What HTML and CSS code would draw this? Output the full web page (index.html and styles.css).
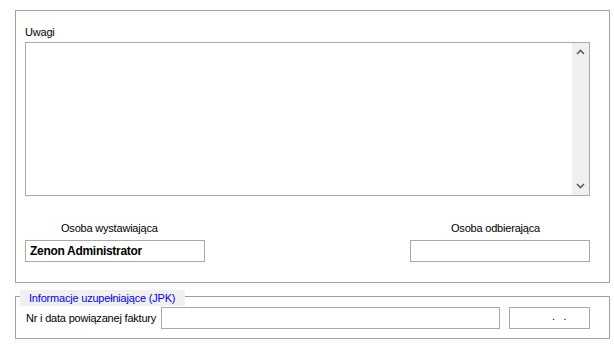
FILE: index.html
```html
<!DOCTYPE html>
<html>
<head>
    <meta charset="UTF-8">
    <title>Uwagi</title>
    <link rel="stylesheet" href="styles.css">
</head>
<body>
    <div class="panel">
        <div class="label">Uwagi</div>
        <div class="memo">
            <div class="memo-text"></div>
            <div class="scroll">
                <svg width="17" height="17" viewBox="0 0 17 17"><path d="M5 10 L8.5 6.5 L12 10" fill="none" stroke="#606060" stroke-width="1.6"/></svg>
                <svg width="17" height="17" viewBox="0 0 17 17"><path d="M5 7 L8.5 10.5 L12 7" fill="none" stroke="#606060" stroke-width="1.6"/></svg>
            </div>
        </div>

        <div class="people">
            <div class="person">
                <div class="person-label left">Osoba wystawiająca</div>
                <div class="field bold">Zenon Administrator</div>
            </div>
            <div class="person">
                <div class="person-label right">Osoba odbierająca</div>
                <div class="field"></div>
            </div>
        </div>
    </div>

    <div class="group">
        <div class="legend">Informacje uzupełniające (JPK)</div>
        <div class="row">
            <span class="row-label">Nr i data powiązanej faktury</span>
            <div class="field invoice"></div>
            <div class="field date"><span class="dots">.&nbsp;&nbsp;&nbsp;.</span></div>
        </div>
    </div>
</body>
</html>
```

FILE: styles.css
```css
body { margin: 0; background: #fff; font-family: "Liberation Sans", Arial, sans-serif; font-size: 11px; letter-spacing: -0.2px; color: #000; white-space: nowrap; }

.panel { box-sizing: border-box; margin: 10px 0 0 15px; width: 595px; height: 273px; border: 1px solid #a0a0a0; padding: 15px 0 0 9px; }
.label { line-height: 13px; height: 16px; }

.memo { box-sizing: border-box; display: flex; width: 565px; height: 154px; border: 1px solid #a9a9a9; }
.memo-text { flex: 1; }
.scroll { width: 17px; background: #f0f0f0; display: flex; flex-direction: column; justify-content: space-between; padding: 1px 0 1px; }
.scroll svg { display: block; }

.people { display: flex; justify-content: space-between; width: 565px; margin-top: 26px; }
.person { width: 180px; }
.person-label { line-height: 13px; height: 18px; }
.person-label.left { padding-left: 36px; }
.person-label.right { padding-left: 41px; }

.field { box-sizing: border-box; height: 22px; border: 1px solid #a9a9a9; background: #fff; line-height: 20px; padding-left: 4px; }
.bold { font-weight: bold; font-size: 12px; letter-spacing: -0.3px; }

.group { box-sizing: border-box; position: relative; margin: 13px 0 0 15px; width: 595px; height: 43px; border: 1px solid #a0a0a0; padding: 10px 0 0 10px; }
.legend { position: absolute; left: 4px; top: -7px; background: #f0f0f0; color: #0000ff; line-height: 16px; padding: 0 10px 0 9px; }
.row { display: flex; align-items: center; }
.row-label { width: 135px; }
.invoice { width: 339px; }
.date { width: 81px; margin-left: 9px; position: relative; }
.dots { position: absolute; left: 42px; top: -2px; }
```
